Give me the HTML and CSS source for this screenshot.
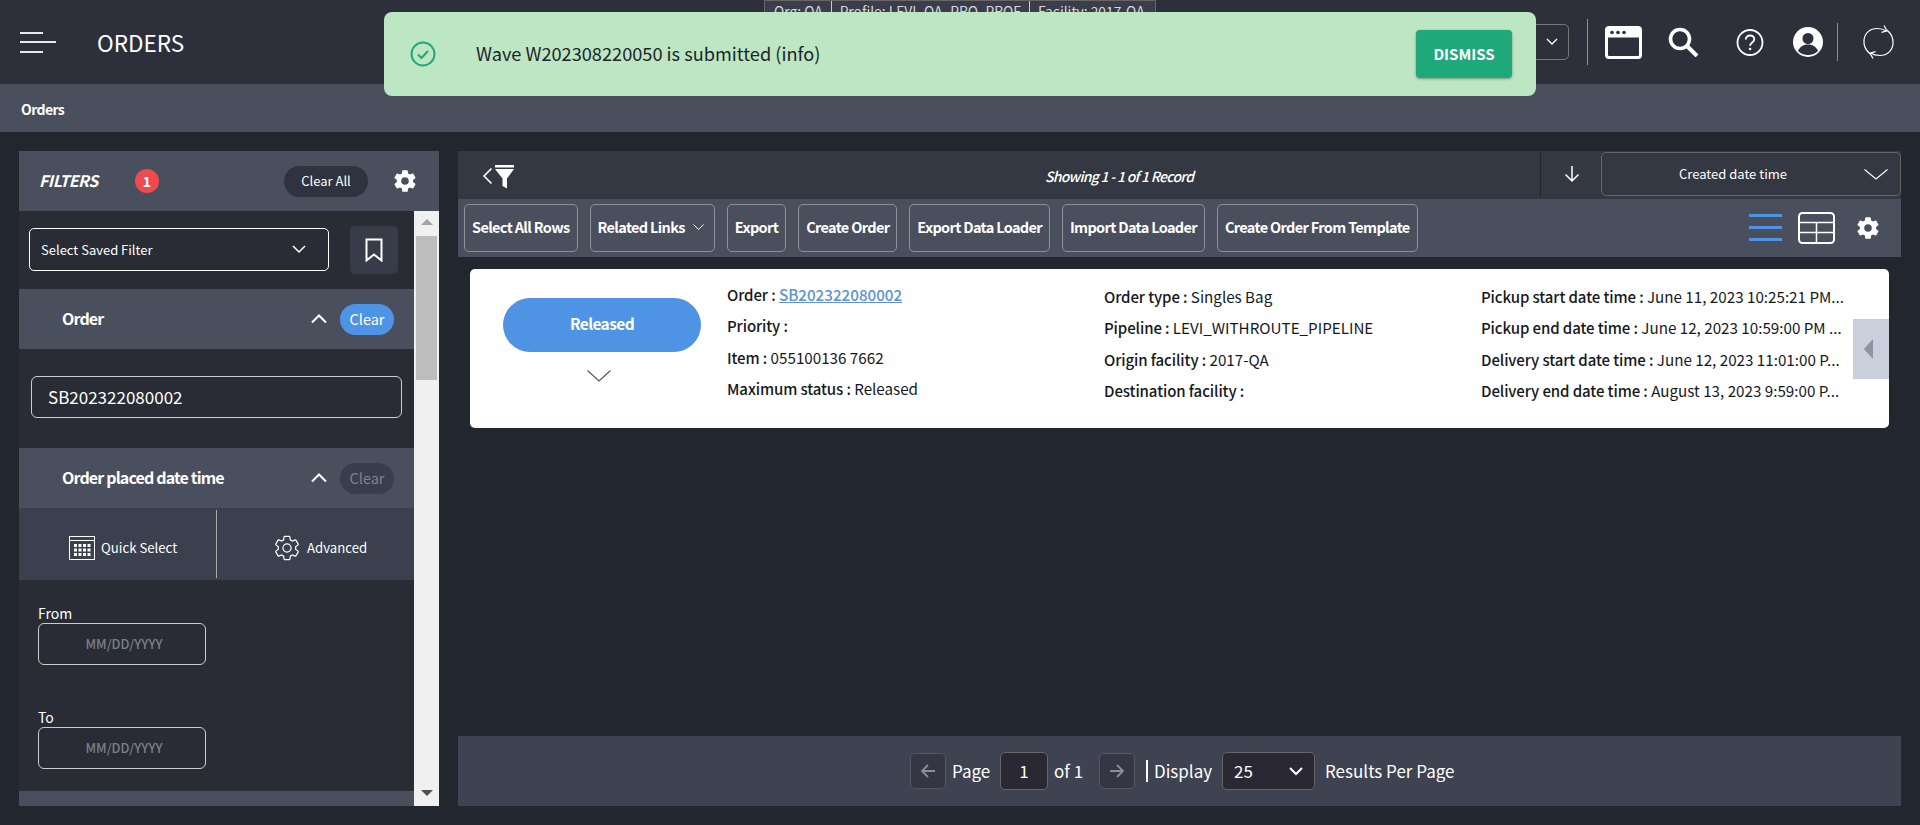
FILE: index.html
```html
<!DOCTYPE html>
<html lang="en">
<head>
<meta charset="utf-8">
<title>Orders</title>
<link rel="stylesheet" href="styles.css">
</head>
<body>
<header class="topbar">
  <button class="burger" aria-label="Menu"><span class="b1"></span><span class="b2"></span><span class="b1"></span></button>
  <h1 class="app-title">ORDERS</h1>
  <div class="top-tools">
    <div class="ctx-select"><svg width="12" height="8" viewBox="0 0 12 8"><path d="M1 1l5 5 5-5" fill="none" stroke="#fff" stroke-width="1.3"/></svg></div>
    <span class="vr tall"></span>
    <svg class="ic-window" width="37" height="33" viewBox="0 0 37 33"><rect x="1.5" y="1.5" width="34" height="30" rx="2.5" fill="none" stroke="#fff" stroke-width="3"/><rect x="1.5" y="1.5" width="34" height="10" fill="#fff"/><circle cx="7" cy="6.5" r="1.8" fill="#2d303b"/><circle cx="13" cy="6.5" r="1.8" fill="#2d303b"/><circle cx="19" cy="6.5" r="1.8" fill="#2d303b"/></svg>
    <svg class="ic-search" width="31" height="30" viewBox="0 0 31 30"><circle cx="12" cy="12" r="9.5" fill="none" stroke="#fff" stroke-width="3.6"/><path d="M19 19l10 10" stroke="#fff" stroke-width="4"/></svg>
    <svg class="ic-help" width="28" height="27" viewBox="0 0 28 27"><circle cx="14" cy="13.5" r="12.5" fill="none" stroke="#fff" stroke-width="1.8"/><path d="M9.8 10.5c0-2.6 2-4 4.300-4s4.200 1.500 4.200 3.700c0 3.300-4.200 3.300-4.200 6.500" fill="none" stroke="#fff" stroke-width="1.900"/><circle cx="14.100" cy="20" r="1.300" fill="#fff"/></svg>
    <svg class="ic-user" width="30" height="30" viewBox="0 0 30 30"><circle cx="15" cy="15" r="15" fill="#fff"/><circle cx="15" cy="11.500" r="5.500" fill="#2d303b"/><path d="M5 24c2-5 6-6.500 10-6.500s8 1.500 10 6.500c-2.500 2.800-6 4-10 4s-7.500-1.200-10-4z" fill="#2d303b"/></svg>
    <span class="vr short"></span>
    <svg class="ic-sync" width="33" height="34" viewBox="0 0 33 34"><path d="M8 29C3.500 25 1.500 20 2 15 2.800 8 8 3.500 15 3.500c3.500 0 7 .8 9.500 2.500" fill="none" stroke="#fff" stroke-width="1.200"/><path d="M22 .5l3 5.300-5.500 1.500" fill="none" stroke="#fff" stroke-width="1.200"/><path d="M25 5c4.500 4 6.500 9 6 14-.8 7-6 11.500-13 11.500-3.500 0-7-.8-9.500-2.500" fill="none" stroke="#fff" stroke-width="1.200"/><path d="M11 33.500l-3-5.300 5.500-1.500" fill="none" stroke="#fff" stroke-width="1.200"/></svg>
  </div>
  <div class="ctx-tab"><span>Org: QA</span><span>Profile: LEVI_QA_PRO_PROF</span><span>Facility: 2017-QA</span></div>
</header>

<div class="toast">
  <svg class="toast-check" width="26" height="26" viewBox="0 0 26 26"><circle cx="13" cy="13" r="11.500" fill="none" stroke="#1fa97b" stroke-width="2"/><path d="M8 13.500l3.500 3.500 6.500-7" fill="none" stroke="#1fa97b" stroke-width="2"/></svg>
  <span class="toast-text">Wave W202308220050 is submitted (info)</span>
  <button class="dismiss">DISMISS</button>
</div>

<nav class="crumbs">Orders</nav>

<div class="content">
  <aside class="sidebar">
    <div class="filter-head">
      <span class="filter-title">FILTERS</span>
      <span class="badge">1</span>
      <button class="clear-all">Clear All</button>
      <svg class="gear" width="26" height="26" viewBox="0 0 24 24"><path fill="#fff" d="M19.400 13c.04-.33.06-.66.06-1s-.02-.67-.06-1l2.100-1.650c.2-.15.25-.42.12-.64l-2-3.460c-.12-.22-.38-.3-.6-.22l-2.480 1c-.52-.4-1.080-.72-1.700-.98l-.37-2.650A.49.49 0 0 0 14 1.980h-4c-.25 0-.46.18-.5.42l-.37 2.650c-.6.26-1.170.6-1.700.98l-2.480-1c-.23-.09-.48 0-.6.220l-2 3.460c-.13.22-.07.490.12.640L4.570 11c-.04.330-.07.670-.07 1s.02.670.07 1l-2.100 1.650c-.2.150-.25.420-.12.640l2 3.460c.12.220.38.300.6.220l2.480-1c.52.400 1.080.720 1.700.980l.37 2.650c.04.240.25.420.5.420h4c.25 0 .46-.18.5-.42l.37-2.650c.6-.26 1.170-.6 1.700-.98l2.480 1c.23.090.48 0 .6-.22l2-3.460c.13-.22.070-.49-.12-.64zM12 15.500a3.500 3.500 0 1 1 0-7 3.500 3.500 0 0 1 0 7z"/></svg>
    </div>
    <div class="filter-wrap">
      <div class="filter-body">
        <div class="saved-row">
          <div class="saved-select"><span>Select Saved Filter</span><svg width="14" height="9" viewBox="0 0 14 9"><path d="M1 1l6 6 6-6" fill="none" stroke="#fff" stroke-width="1.500"/></svg></div>
          <button class="bookmark" aria-label="Bookmark"><svg width="18" height="24" viewBox="0 0 18 24"><path d="M1.500 1.500h15v21L9 16.500l-7.500 6z" fill="none" stroke="#fff" stroke-width="2"/></svg></button>
        </div>
        <div class="sec-head">
          <span class="sec-title">Order</span>
          <svg class="sec-chev" width="16" height="10" viewBox="0 0 16 10"><path d="M1 8.500l7-7 7 7" fill="none" stroke="#fff" stroke-width="2"/></svg>
          <button class="pill on">Clear</button>
        </div>
        <div class="order-input-wrap"><div class="text-input">SB202322080002</div></div>
        <div class="sec-head">
          <span class="sec-title">Order placed date time</span>
          <svg class="sec-chev" width="16" height="10" viewBox="0 0 16 10"><path d="M1 8.500l7-7 7 7" fill="none" stroke="#fff" stroke-width="2"/></svg>
          <button class="pill off">Clear</button>
        </div>
        <div class="date-tabs">
          <div class="date-tab quick">
            <svg width="26" height="24" viewBox="0 0 26 24"><rect x=".5" y=".5" width="25" height="23" fill="none" stroke="#fff"/><path d="M1 4.500h24" stroke="#fff"/><g fill="#fff"><rect x="5" y="8" width="3" height="3"/><rect x="9.500" y="8" width="3" height="3"/><rect x="14" y="8" width="3" height="3"/><rect x="18.500" y="8" width="3" height="3"/><rect x="5" y="12.500" width="3" height="3"/><rect x="9.500" y="12.500" width="3" height="3"/><rect x="14" y="12.500" width="3" height="3"/><rect x="18.500" y="12.500" width="3" height="3"/><rect x="5" y="17" width="3" height="3"/><rect x="9.500" y="17" width="3" height="3"/><rect x="14" y="17" width="3" height="3"/><rect x="18.500" y="17" width="3" height="3"/></g></svg>
            <span>Quick Select</span>
          </div>
          <div class="date-tab adv">
            <svg width="28" height="28" viewBox="0 0 24 24"><path fill="none" stroke="#fff" stroke-width="1" d="M19.400 13c.04-.33.06-.66.06-1s-.02-.67-.06-1l2.100-1.650c.2-.15.25-.42.12-.64l-2-3.460c-.12-.22-.38-.3-.6-.22l-2.480 1c-.52-.4-1.080-.72-1.700-.98l-.37-2.650A.49.49 0 0 0 14 1.980h-4c-.25 0-.46.18-.5.42l-.37 2.650c-.6.26-1.170.6-1.700.98l-2.480-1c-.23-.09-.48 0-.6.220l-2 3.460c-.13.22-.07.490.12.640L4.570 11c-.04.330-.07.670-.07 1s.02.670.07 1l-2.100 1.650c-.2.150-.25.420-.12.640l2 3.460c.12.220.38.300.6.220l2.480-1c.52.400 1.080.720 1.700.980l.37 2.650c.04.240.25.420.5.420h4c.25 0 .46-.18.5-.42l.37-2.650c.6-.26 1.170-.6 1.700-.98l2.480 1c.23.090.48 0 .6-.22l2-3.460c.13-.22.070-.49-.12-.64zM12 15.500a3.500 3.500 0 1 1 0-7 3.500 3.500 0 0 1 0 7z"/></svg>
            <span>Advanced</span>
          </div>
        </div>
        <div class="date-fields">
          <label class="field-label">From</label>
          <div class="date-input">MM/DD/YYYY</div>
          <label class="field-label to">To</label>
          <div class="date-input">MM/DD/YYYY</div>
        </div>
        <div class="sec-head"></div>
      </div>
      <div class="scrollbar">
        <span class="arrow-up"></span>
        <span class="thumb"></span>
        <span class="arrow-down"></span>
      </div>
    </div>
  </aside>

  <main class="main">
    <div class="record-bar">
      <svg class="filter-toggle" width="32" height="24" viewBox="0 0 32 24"><path d="M9.500 3.500L2 11l7.500 7.500" fill="none" stroke="#fff" stroke-width="1.600"/><path d="M13 0h19v2.500H13zM13 4h19l-7 9.500V23.500L20.500 21v-7.500z" fill="#fff"/></svg>
      <span class="record-count">Showing 1 - 1 of 1 Record</span>
      <div class="sort">
        <svg class="sort-arrow" width="16" height="18" viewBox="0 0 16 18"><path d="M8 1v15M1.500 9.500L8 16l6.500-6.500" fill="none" stroke="#fff" stroke-width="1.500"/></svg>
        <div class="sort-select"><span>Created date time</span><svg width="24" height="11" viewBox="0 0 24 11"><path d="M.5.500L12 10 23.500.500" fill="none" stroke="#fff" stroke-width="1.100"/></svg></div>
      </div>
    </div>
    <div class="toolbar">
      <button class="tool">Select All Rows</button>
      <button class="tool">Related Links<svg width="11" height="7" viewBox="0 0 11 7"><path d="M.5.500l5 5 5-5" fill="none" stroke="#fff"/></svg></button>
      <button class="tool">Export</button>
      <button class="tool">Create Order</button>
      <button class="tool">Export Data Loader</button>
      <button class="tool">Import Data Loader</button>
      <button class="tool">Create Order From Template</button>
      <div class="views">
        <svg width="33" height="28" viewBox="0 0 33 28"><path d="M0 1.500h33M0 13.500h33M0 25.500h33" stroke="#4f94e4" stroke-width="3"/></svg>
        <svg width="37" height="32" viewBox="0 0 37 32"><rect x="1" y="1" width="35" height="30" rx="3.500" fill="none" stroke="#fff" stroke-width="2"/><path d="M1 10.500h35M1 20.500h35M18.500 10.500V31" stroke="#fff" stroke-width="1.500"/></svg>
        <svg width="26" height="26" viewBox="0 0 24 24"><path fill="#fff" d="M19.400 13c.04-.33.06-.66.06-1s-.02-.67-.06-1l2.100-1.650c.2-.15.25-.42.12-.64l-2-3.460c-.12-.22-.38-.3-.6-.22l-2.480 1c-.52-.4-1.080-.72-1.700-.98l-.37-2.650A.49.49 0 0 0 14 1.980h-4c-.25 0-.46.18-.5.42l-.37 2.650c-.6.26-1.170.6-1.700.98l-2.480-1c-.23-.09-.48 0-.6.220l-2 3.460c-.13.22-.07.490.12.640L4.570 11c-.04.330-.07.670-.07 1s.02.670.07 1l-2.100 1.650c-.2.150-.25.420-.12.640l2 3.460c.12.220.38.300.6.220l2.480-1c.52.400 1.080.720 1.700.980l.37 2.650c.04.240.25.420.5.420h4c.25 0 .46-.18.5-.42l.37-2.650c.6-.26 1.170-.6 1.700-.98l2.480 1c.23.090.48 0 .6-.22l2-3.460c.13-.22.070-.49-.12-.64zM12 15.500a3.500 3.500 0 1 1 0-7 3.500 3.500 0 0 1 0 7z"/></svg>
      </div>
    </div>

    <div class="results">
      <article class="card">
        <div class="status-col">
          <div class="status-pill">Released</div>
          <svg width="24" height="12" viewBox="0 0 24 12"><path d="M.5.500L12 11 23.500.500" fill="none" stroke="#555" stroke-width="1.100"/></svg>
        </div>
        <div class="info-col first">
          <div class="kv"><b>Order :</b> <a href="#">SB202322080002</a></div>
          <div class="kv"><b>Priority :</b></div>
          <div class="kv"><b>Item :</b> 055100136 7662</div>
          <div class="kv"><b>Maximum status :</b> Released</div>
        </div>
        <div class="info-col second">
          <div class="kv"><b>Order type :</b> Singles Bag</div>
          <div class="kv"><b>Pipeline :</b> LEVI_WITHROUTE_PIPELINE</div>
          <div class="kv"><b>Origin facility :</b> 2017-QA</div>
          <div class="kv"><b>Destination facility :</b></div>
        </div>
        <div class="info-col third">
          <div class="kv"><b>Pickup start date time :</b> June 11, 2023 10:25:21 PM...</div>
          <div class="kv"><b>Pickup end date time :</b> June 12, 2023 10:59:00 PM ...</div>
          <div class="kv"><b>Delivery start date time :</b> June 12, 2023 11:01:00 P...</div>
          <div class="kv"><b>Delivery end date time :</b> August 13, 2023 9:59:00 P...</div>
        </div>
        <button class="card-tab" aria-label="Expand"><span></span></button>
      </article>
    </div>

    <footer class="pager">
      <button class="page-btn"><svg width="16" height="14" viewBox="0 0 16 14"><path d="M15 7H2M8 1L2 7l6 6" fill="none" stroke="#8b8e98" stroke-width="1.800"/></svg></button>
      <span class="pg-page">Page</span>
      <div class="pg-input">1</div>
      <span class="pg-of">of 1</span>
      <button class="page-btn next"><svg width="16" height="14" viewBox="0 0 16 14"><path d="M1 7h13M8 1l6 6-6 6" fill="none" stroke="#8b8e98" stroke-width="1.800"/></svg></button>
      <span class="pg-sep"></span>
      <span class="pg-display">Display</span>
      <div class="pg-select"><span>25</span><svg width="14" height="9" viewBox="0 0 14 9"><path d="M1 1l6 6 6-6" fill="none" stroke="#fff" stroke-width="2"/></svg></div>
      <span class="pg-results">Results Per Page</span>
    </footer>
  </main>
</div>
</body>
</html>
```
FILE: styles.css
```css
* { box-sizing: border-box; }
html, body { margin: 0; height: 825px; overflow: hidden; }
body {
  background: #22262e;
  color: #fff;
  font-family: "Noto Sans CJK JP", "Noto Sans", sans-serif;
  font-size: 14px;
  line-height: 20px;
  position: relative;
  display: flex;
  flex-direction: column;
}
button { font: inherit; color: inherit; background: none; border: 0; padding: 0; }
svg { display: block; flex: none; }

.topbar {
  height: 84px;
  flex: none;
  background: #2d303b;
  display: flex;
  align-items: center;
  position: relative;
}
.burger {
  margin-left: 20px;
  width: 36px;
  height: 21px;
  display: flex;
  flex-direction: column;
  justify-content: space-between;
  align-items: flex-start;
}
.burger span { display: block; height: 2px; background: #e8e8ea; }
.b1 { width: 23px; }
.b2 { width: 36px; }
.app-title { margin: 0 0 0 41px; font-size: 22.500px; font-weight: 400; line-height: 30px; }
.top-tools { margin-left: auto; display: flex; align-items: center; height: 84px; }
.ctx-select {
  width: 60px;
  height: 36px;
  border: 1px solid #777;
  border-radius: 5px;
  display: flex;
  align-items: center;
  justify-content: flex-end;
  padding-right: 10px;
}
.vr { width: 1px; background: #8e9098; display: block; }
.vr.tall { height: 46px; margin-left: 18px; }
.ic-window { margin-left: 17px; }
.ic-search { margin-left: 26px; }
.ic-help { margin-left: 37px; }
.ic-user { margin-left: 29px; }
.vr.short { height: 38px; margin-left: 14px; }
.ic-sync { margin-left: 24px; margin-right: 25px; }
.ctx-tab {
  position: absolute;
  left: 764px;
  top: 0;
  width: 392px;
  height: 20px;
  background: #3a3e4a;
  border: 1px solid #666;
  display: flex;
  color: #d8d8dc;
  font-size: 13.800px;
  line-height: 20px;
  padding-left: 1px;
  white-space: nowrap;
}
.ctx-tab span { padding: 0 8px; border-left: 1px solid #ccc; height: 17px; }
.ctx-tab span:first-child { border-left: 0; }

.toast {
  position: absolute;
  left: 384px;
  top: 12px;
  width: 1152px;
  height: 84px;
  background: #bde6c3;
  border-radius: 8px;
  display: flex;
  align-items: center;
  color: #20242c;
  z-index: 5;
  padding: 0 24px 0 26px;
}
.toast-text { margin-left: 40px; font-size: 18.200px; line-height: 24px; margin-top: -2px; }
.dismiss {
  margin-left: auto;
  width: 96px;
  height: 48px;
  background: #1fa97b;
  border-radius: 4px;
  color: #fff;
  font-weight: 700;
  font-size: 15px;
  box-shadow: 0 1px 3px rgba(0,0,0,.35);
}

.crumbs {
  height: 48px;
  flex: none;
  background: #4a4f5e;
  padding-left: 21px;
  font-weight: 700;
  font-size: 14px;
  letter-spacing: -.6px;
  line-height: 50px;
}

.content {
  flex: 1;
  min-height: 0;
  display: flex;
  gap: 19px;
  padding: 19px;
}

.sidebar {
  width: 420px;
  flex: none;
  display: flex;
  flex-direction: column;
  background: #292c35;
  overflow: hidden;
}
.filter-head {
  height: 60px;
  flex: none;
  background: #4a4f5e;
  display: flex;
  align-items: center;
  padding-left: 20px;
}
.filter-title { font-style: italic; font-weight: 700; font-size: 16px; letter-spacing: -.5px; width: 56px; margin-top: -2px; }
.badge {
  margin-left: 40px;
  width: 24px;
  height: 24px;
  border-radius: 50%;
  background: #ef4b4f;
  text-align: center;
  font-weight: 700;
  font-size: 14px;
  line-height: 24px;
}
.clear-all {
  margin-left: 125px;
  width: 84px;
  height: 31px;
  border-radius: 16px;
  background: #2f3340;
  font-size: 13px;
}
.gear { margin-left: 24px; }

.filter-wrap { flex: 1; min-height: 0; display: flex; }
.filter-body { width: 395px; flex: none; overflow: hidden; }
.saved-row { height: 78px; display: flex; align-items: flex-start; padding: 15px 0 0 10px; }
.saved-select {
  width: 300px;
  height: 43px;
  margin-top: 2px;
  border: 1px solid #fff;
  border-radius: 5px;
  display: flex;
  align-items: center;
  justify-content: space-between;
  padding: 0 22px 0 11px;
  font-size: 13px;
}
.bookmark {
  margin-left: 21px;
  width: 48px;
  height: 48px;
  border-radius: 5px;
  background: #373c48;
  display: flex;
  align-items: center;
  justify-content: center;
}
.sec-head {
  height: 60px;
  background: #4a4f5e;
  display: flex;
  align-items: center;
  padding-left: 43px;
}
.sec-title { font-weight: 700; font-size: 16px; letter-spacing: -.85px; margin-top: -2px; }
.sec-chev { margin-left: auto; }
.pill { margin-left: 13px; margin-right: 20px; width: 54px; height: 31px; border-radius: 16px; font-size: 14.500px; }
.pill.on { background: #4f94e4; color: #fff; }
.pill.off { background: #3a3e4c; color: #7e828d; }
.order-input-wrap { height: 99px; padding: 27px 12px 0 12px; }
.text-input {
  height: 42px;
  border: 1px solid #ccc;
  border-radius: 6px;
  padding-left: 16px;
  font-size: 17px;
  line-height: 40px;
}
.date-tabs { height: 72px; background: #3a404d; display: flex; align-items: center; }
.date-tab { height: 68px; display: flex; align-items: center; font-size: 13.200px; padding-top: 8px; }
.date-tab.quick { width: 198px; border-right: 1px solid #aaa; padding-left: 50px; gap: 6px; }
.date-tab.adv { padding-left: 56px; gap: 6px; }
.date-fields { height: 211px; padding: 23px 0 0 19px; }
.field-label { display: block; height: 20px; font-size: 14px; line-height: 20px; }
.field-label.to { margin-top: 42px; }
.date-input {
  width: 168px;
  height: 42px;
  border: 1px solid #ccc;
  border-radius: 6px;
  color: #7c7f87;
  font-size: 12.800px;
  font-weight: 500;
  text-align: center;
  line-height: 40px;
  padding-left: 4px;
}

.scrollbar { width: 25px; background: #f0f0f0; display: flex; flex-direction: column; align-items: center; }
.arrow-up { margin-top: 8px; border: 6px solid transparent; border-top: 0; border-bottom: 6px solid #a3a3a3; }
.thumb { margin-top: 11px; width: 21px; height: 144px; background: #bdbdbd; }
.arrow-down { margin-top: auto; margin-bottom: 10px; border: 6px solid transparent; border-bottom: 0; border-top: 6px solid #505050; }

.main { flex: 1; min-width: 0; display: flex; flex-direction: column; }
.record-bar {
  height: 48px;
  flex: none;
  background: #343843;
  display: flex;
  align-items: center;
  padding-left: 24px;
}
.filter-toggle { margin-top: 3px; }
.record-count {
  margin-left: 531px;
  font-style: italic;
  font-size: 14px;
  font-weight: 500;
  letter-spacing: -.72px;
  margin-top: 2px;
}
.sort {
  margin-left: auto;
  height: 46px;
  display: flex;
  align-items: center;
  border-left: 1px solid #22262e;
  width: 361px;
}
.sort-arrow { margin-left: 23px; margin-top: -3px; }
.sort-select {
  margin-left: 21px;
  width: 300px;
  height: 44px;
  border: 1px solid #666;
  border-radius: 5px;
  display: flex;
  align-items: center;
  font-size: 13px;
  padding: 0 12px 0 0;
  margin-top: -2px;
}
.sort-select span { flex: 1; text-align: center; }
.toolbar {
  height: 58px;
  flex: none;
  background: #4a4f5e;
  display: flex;
  align-items: center;
  gap: 12px;
  padding-left: 6px;
}
.tool {
  height: 48px;
  border: 1px solid #8d9099;
  border-radius: 5px;
  padding: 0 7px 2px;
  font-weight: 700;
  font-size: 14.500px;
  letter-spacing: -.66px;
  display: flex;
  align-items: center;
  gap: 8px;
  white-space: nowrap;
}
.tool svg { margin-right: 3px; }
.views { margin-left: auto; display: flex; align-items: center; margin-right: 20px; }
.views svg:nth-child(2) { margin-left: 16px; }
.views svg:nth-child(3) { margin-left: 20px; }

.results { flex: 1; min-height: 0; padding: 12px 12px 0 12px; }
.card {
  height: 159px;
  background: #fff;
  border-radius: 5px;
  color: #16181d;
  display: flex;
  position: relative;
  font-size: 15.200px;
}
.status-col { width: 257px; flex: none; padding: 29px 0 0 33px; }
.status-col svg { margin: 18px 0 0 84px; }
.status-pill {
  width: 198px;
  height: 54px;
  border-radius: 27px;
  background: #4f94e4;
  color: #fff;
  font-weight: 700;
  font-size: 15.500px;
  letter-spacing: -.6px;
  text-align: center;
  line-height: 50px;
}
.info-col { min-width: 0; }
.info-col.first { width: 377px; flex: none; padding-top: 10px; }
.info-col.second { width: 377px; flex: none; padding-top: 12px; }
.info-col.third { width: 363px; flex: none; padding-top: 12px; }
.kv { height: 31.300px; line-height: 31px; white-space: nowrap; }
.kv b { font-weight: 500; font-size: 15px; letter-spacing: -.1px; }
.kv a { color: #5b93d3; font-weight: 500; text-decoration: underline; }
.card-tab {
  position: absolute;
  right: 0;
  top: 50px;
  width: 36px;
  height: 60px;
  background: #c9cfdb;
  display: flex;
  align-items: center;
  justify-content: center;
}
.card-tab span { border: 10px solid transparent; border-left: 0; border-right: 9px solid #8c93a3; margin-right: 5px; }

.pager {
  height: 70px;
  flex: none;
  background: #3e4251;
  display: flex;
  align-items: center;
  padding-left: 452px;
  font-size: 17px;
  white-space: nowrap;
}
.page-btn {
  width: 36px;
  height: 36px;
  border: 1px solid #555863;
  border-radius: 5px;
  background: #343743;
  display: flex;
  align-items: center;
  justify-content: center;
}
.pg-page { margin-left: 6px; width: 38px; }
.pg-input {
  margin-left: 10px;
  width: 48px;
  height: 38px;
  border: 1px solid #666;
  border-radius: 5px;
  background: #2a2832;
  text-align: center;
  line-height: 36px;
}
.pg-of { margin-left: 6px; width: 28px; }
.page-btn.next { margin-left: 17px; }
.pg-sep { margin-left: 11px; width: 2px; height: 22px; background: #fff; }
.pg-display { margin-left: 6px; width: 58px; }
.pg-select {
  margin-left: 10px;
  width: 93px;
  height: 38px;
  border: 1px solid #666;
  border-radius: 5px;
  background: #2a2832;
  display: flex;
  align-items: center;
  justify-content: space-between;
  padding: 0 11px;
}
.pg-results { margin-left: 10px; }
```
